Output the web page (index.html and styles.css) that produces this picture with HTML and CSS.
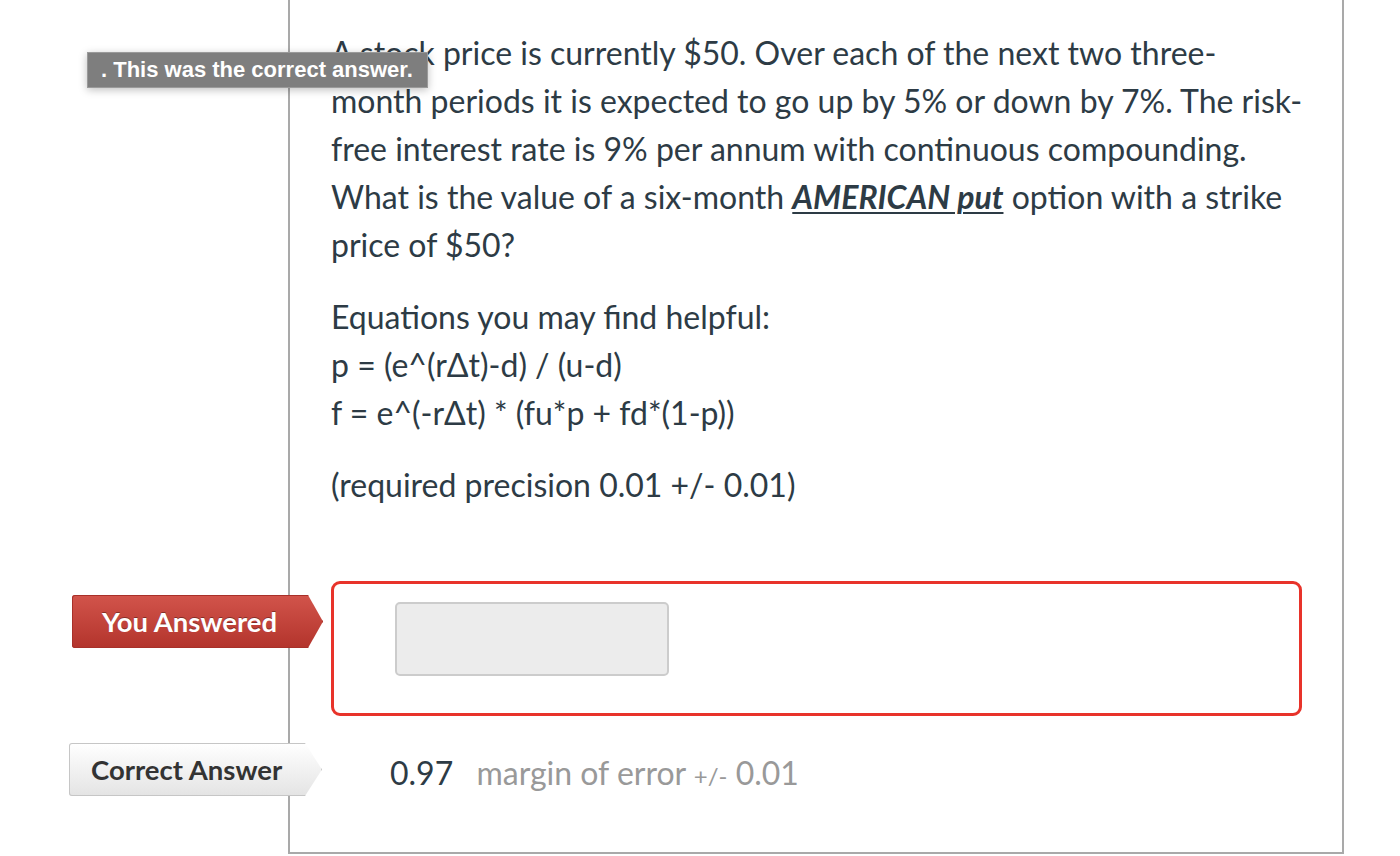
FILE: index.html
```html
<!DOCTYPE html>
<html>
<head>
<meta charset="utf-8">
<link rel="stylesheet" href="styles.css">
</head>
<body>
<div class="quiz">
  <div class="tooltip">. This was the correct answer.</div>
  <div class="side"></div>
  <div class="main question">
    <p>A stock price is currently $50. Over each of the next two three-month periods it is expected to go up by 5% or down by 7%. The risk-free interest rate is 9% per annum with continuous compounding. What is the value of a six-month <strong class="emph">AMERICAN put</strong> option with a strike price of $50?</p>
    <p>Equations you may find helpful:<br>p = (e^(rΔt)-d) / (u-d)<br>f = e^(-rΔt) * (fu*p + fd*(1-p))</p>
    <p class="precision">(required precision 0.01 +/- 0.01)</p>
  </div>
  <div class="side"><div class="label wrong">You Answered</div></div>
  <div class="main answered">
    <div class="answer-box"><div class="blank"></div></div>
  </div>
  <div class="side"><div class="label correct">Correct Answer</div></div>
  <div class="main correct-row">
    <span class="value">0.97</span>
    <span class="margin">margin of error <span class="pm">+/-</span> 0.01</span>
  </div>
</div>
</body>
</html>
```

FILE: styles.css
```css
html, body {
  margin: 0;
  padding: 0;
  background: #ffffff;
}

body {
  font-family: Lato, "Noto Sans", sans-serif;
  color: #2d3b45;
}

.quiz {
  position: relative;
  display: grid;
  grid-template-columns: 288px 1056px;
}

.main {
  border-left: 2px solid #a9a9a9;
  border-right: 2px solid #a9a9a9;
}

.question {
  padding: 29px 36px 0 41px;
  font-size: 32px;
  line-height: 48px;
}

.question p {
  margin: 0 0 24px 0;
}

.question p.precision {
  margin: 24px 0 0 0;
}

.emph {
  font-weight: bold;
  font-style: italic;
  text-decoration: underline;
  text-decoration-thickness: 2px;
  text-underline-offset: 3px;
}

.tooltip {
  position: absolute;
  left: 87px;
  top: 52px;
  z-index: 2;
  width: 341px;
  height: 36px;
  box-sizing: border-box;
  padding: 0 0 0 13px;
  background: #7e7e7e;
  border: 1px solid #9a9a9a;
  box-shadow: 0 2px 8px rgba(0, 0, 0, 0.25);
  color: #ffffff;
  font-family: "Liberation Sans", Arial, sans-serif;
  font-weight: bold;
  font-size: 22px;
  line-height: 34px;
  white-space: nowrap;
}

.answered {
  padding: 72px 40px 0 41px;
}

.answer-box {
  height: 135px;
  box-sizing: border-box;
  border: 3px solid #e8332a;
  border-radius: 9px;
  padding: 18px 0 0 61px;
}

.blank {
  width: 274px;
  height: 74px;
  box-sizing: border-box;
  background: #ececec;
  border: 2px solid #cccccc;
  border-radius: 5px;
}

.label {
  position: relative;
  z-index: 1;
  height: 53px;
  box-sizing: border-box;
  font-weight: bold;
  font-size: 27.5px;
  line-height: 53px;
  white-space: nowrap;
  clip-path: polygon(0 0, 236px 0, 100% 50%, 236px 100%, 0 100%);
  border-radius: 3px 0 0 3px;
}

.label.wrong {
  width: 251px;
  margin: 86px 0 0 72px;
  padding-left: 30px;
  color: #ffffff;
  background: linear-gradient(#d2544b, #b3342c);
  text-shadow: 0 -1px 0 rgba(0, 0, 0, 0.35);
  box-shadow: inset 0 0 0 1px #a83029;
}

.label.correct {
  width: 253px;
  margin: 27px 0 0 69px;
  padding-left: 22px;
  color: #333333;
  background: linear-gradient(#ffffff, #e4e4e4);
  box-shadow: inset 0 0 0 1px #c6c6c6;
}

.correct-row {
  border-bottom: 2px solid #a9a9a9;
  padding: 33px 0 0 100px;
  font-size: 32px;
  line-height: 48px;
  height: 138px;
  box-sizing: border-box;
}

.value {
  color: #2d3b45;
  margin-right: 15px;
}

.margin {
  color: #999999;
}

.pm {
  font-size: 24px;
}
```
